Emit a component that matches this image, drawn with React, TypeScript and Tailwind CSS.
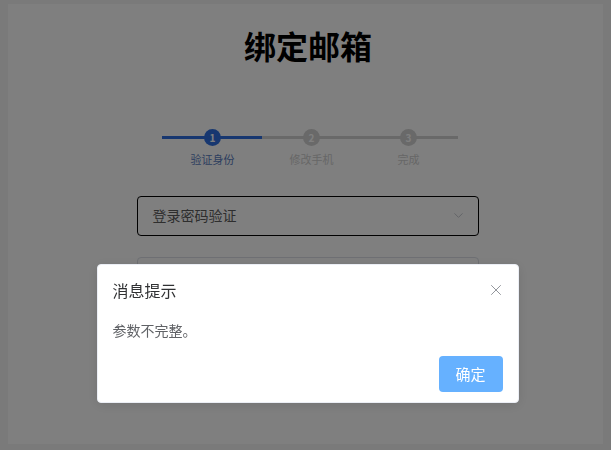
import { ChevronDown, X } from "lucide-react";

const steps = [
  { n: 1, label: "验证身份", active: true },
  { n: 2, label: "修改手机", active: false },
  { n: 3, label: "完成", active: false },
];

export default function App() {
  return (
    <div
      className="h-[450px] w-[611px] bg-[#f4f4f4] pt-1 pl-2 pr-2 pb-1.5"
      style={{ fontFamily: '"Noto Sans CJK SC", "Noto Sans", sans-serif' }}
    >
      <div className="flex h-full flex-col items-center bg-white">
        <h1 className="ml-[5px] mt-[21px] text-[32px] font-bold leading-[40px] text-black">绑定邮箱</h1>

        {/* steps */}
        <div className="relative ml-[8px] mt-[64px] w-[296px]">
          <div className="absolute left-0 top-[7px] h-[3px] w-[100px] bg-[#2f6fe0]" />
          <div className="absolute left-[100px] top-[7px] h-[3px] w-[196px] bg-[#d2d2d2]" />
          <div className="relative flex">
            {steps.map((s, i) => (
              <div
                key={s.n}
                className={
                  i === 0
                    ? "ml-[43px] flex w-[16px] flex-col items-center"
                    : i === 1
                    ? "ml-[83px] flex w-[16px] flex-col items-center"
                    : "ml-[81px] flex w-[16px] flex-col items-center"
                }
              >
                <div
                  className={
                    s.active
                      ? "flex h-[17px] w-[17px] items-center justify-center rounded-full bg-[#2f6fe0] text-[10px] font-bold text-white"
                      : "flex h-[17px] w-[17px] items-center justify-center rounded-full bg-[#d2d2d2] text-[10px] font-bold text-white"
                  }
                >
                  {s.n}
                </div>
                <span
                  className={
                    s.active
                      ? "mt-[5px] whitespace-nowrap text-[11px] text-[#5a7cc0]"
                      : "mt-[5px] whitespace-nowrap text-[11px] text-[#cecece]"
                  }
                >
                  {s.label}
                </span>
              </div>
            ))}
          </div>
        </div>

        {/* select */}
        <div className="ml-[4px] mt-[28px] flex h-[40px] w-[342px] items-center justify-between rounded-[4px] border border-black pl-[15px] pr-[12px]">
          <span className="text-[14px] text-[#5c5c5c]">登录密码验证</span>
          <ChevronDown className="h-[15px] w-[15px] text-[#c0c4cc]" strokeWidth={1.5} />
        </div>

        <div className="ml-[4px] mt-[21px] h-[40px] w-[342px] rounded-[4px] border border-[#dcdfe6]" />
      </div>

      {/* overlay */}
      <div className="fixed inset-0 flex flex-col items-center bg-black/50">
        <div className="ml-[4px] mt-[264px] w-[422px] rounded-[4px] border border-[#ebeef5] bg-white pb-[10px] shadow-[0_2px_12px_rgba(0,0,0,0.1)]">
          <div className="flex items-center justify-between pl-[15px] pr-[13px] pt-[16px]">
            <span className="text-[16px] leading-[16px] text-[#303133]">消息提示</span>
            <X className="h-[18px] w-[18px] text-[#909399]" strokeWidth={1.3} />
          </div>
          <div className="px-[15px] pt-[23px] text-[14px] leading-[16px] text-[#606266]">参数不完整。</div>
          <div className="flex justify-end px-[15px] pt-[18px]">
            <button className="h-[36px] w-[64px] rounded-[4px] bg-[#66b1ff] text-[15px] text-white">确定</button>
          </div>
        </div>
      </div>
    </div>
  );
}
